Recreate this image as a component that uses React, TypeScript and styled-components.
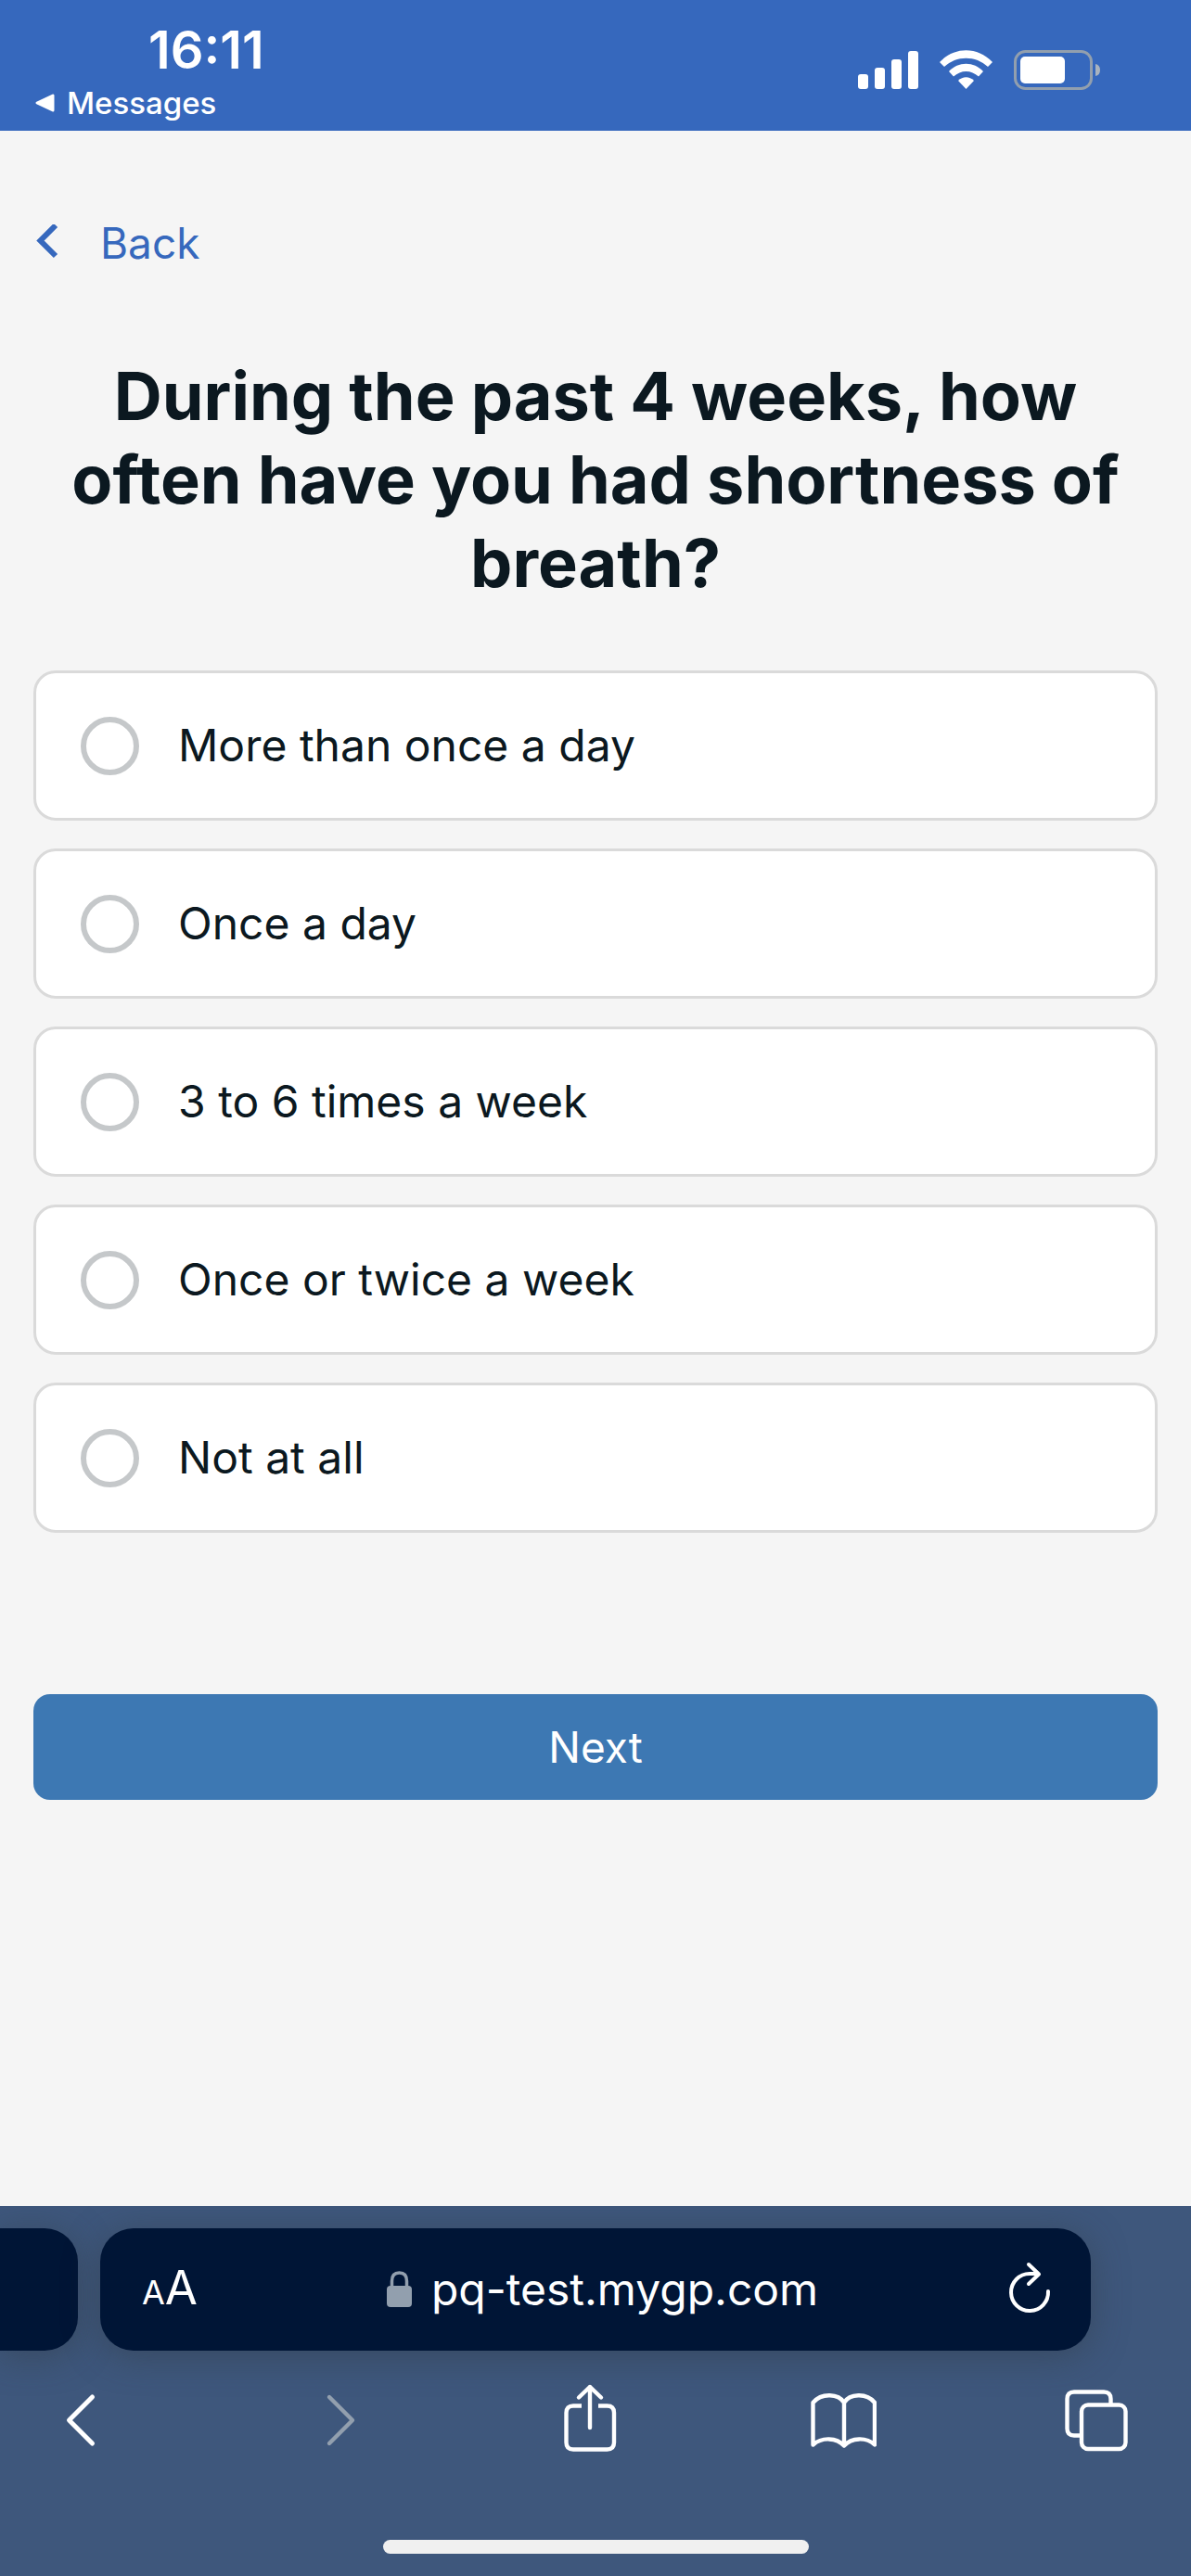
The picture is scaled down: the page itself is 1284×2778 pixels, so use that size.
import React, { useState } from "react";
import styled, { createGlobalStyle } from "styled-components";

const GlobalStyle = createGlobalStyle`
  *, *::before, *::after { box-sizing: border-box; }
  body { margin: 0; background: #f5f5f5; }
  button, input { font: inherit; margin: 0; }
`;

const Screen = styled.div`
  min-height: 100vh;
  display: flex;
  flex-direction: column;
  background: #f5f5f5;
  color: #0b1820;
  font-family: Inter, "Liberation Sans", sans-serif;
  font-size: 48px;
  line-height: 72px;
`;

const PlainButton = styled.button`
  display: flex;
  align-items: center;
  padding: 0;
  border: 0;
  background: none;
  color: inherit;

  &:disabled {
    color: #929fae;
  }
`;

const StatusBar = styled.header`
  display: flex;
  justify-content: space-between;
  height: 141px;
  padding: 24px 97px 0 36px;
  background: #3668bd;
  color: #ffffff;
`;

const StatusLeft = styled.div`
  display: flex;
  flex-direction: column;
`;

const Clock = styled.time`
  padding-left: 124px;
  font-size: 56px;
  font-weight: 600;
  line-height: 60px;
`;

const ReturnButton = styled(PlainButton)`
  gap: 12px;
  font-size: 33px;
  font-weight: 500;
  line-height: 54px;
`;

const StatusIcons = styled.div`
  display: flex;
  align-items: flex-start;
  gap: 23px;
  padding-top: 30px;
`;

const Main = styled.main`
  flex: 1;
  display: flex;
  flex-direction: column;
  padding: 85px 36px 0;
`;

const BackLink = styled.a`
  align-self: flex-start;
  display: flex;
  align-items: center;
  gap: 45px;
  color: #3668bd;
  font-size: 46px;
  text-decoration: none;
`;

const Form = styled.form`
  display: flex;
  flex-direction: column;
`;

const Question = styled.h1`
  margin: 84px 0 71px;
  font-size: 72px;
  font-weight: 700;
  font-variant-ligatures: none;
  line-height: 90px;
  text-align: center;
`;

const Options = styled.div`
  display: flex;
  flex-direction: column;
  gap: 30px;
`;

const Option = styled.label`
  display: flex;
  align-items: center;
  gap: 42px;
  height: 162px;
  padding: 0 48px;
  border: 3px solid #dadada;
  border-radius: 24px;
  background: #ffffff;
`;

const Radio = styled.input`
  appearance: none;
  width: 63px;
  height: 63px;
  border: 6px solid #c5c8ca;
  border-radius: 50%;
  background: #ffffff;

  &:checked {
    border-color: #3d78b3;
    background: #3d78b3;
    box-shadow: inset 0 0 0 9px #ffffff;
  }
`;

const NextButton = styled.button`
  height: 114px;
  margin-top: 174px;
  padding: 0;
  border: 0;
  border-radius: 18px;
  background: #3d78b3;
  color: #ffffff;
  font-size: 46px;
`;

const BrowserBar = styled.footer`
  padding: 24px 0;
  background: #3e577c;
  color: #ffffff;
  overflow: hidden;
`;

const Tabs = styled.div`
  display: flex;
  gap: 24px;
  padding-right: 108px;
`;

const NeighbourTab = styled.div`
  width: 84px;
  height: 132px;
  border-radius: 0 36px 36px 0;
  background: #001536;
  box-shadow: 0 6px 36px rgba(50, 60, 70, 0.5);
`;

const AddressBar = styled.div`
  flex: 1;
  display: flex;
  align-items: center;
  justify-content: space-between;
  height: 132px;
  padding: 0 42px 0 45px;
  border-radius: 36px;
  background: #001536;
  box-shadow: 0 6px 36px rgba(50, 60, 70, 0.5);
`;

const TextSizeButton = styled(PlainButton)`
  align-items: baseline;
  font-size: 51px;
`;

const SmallLetter = styled.span`
  font-size: 36px;
`;

const Address = styled.div`
  display: flex;
  align-items: center;
  gap: 21px;
`;

const Toolbar = styled.nav`
  display: flex;
  justify-content: space-between;
  padding: 33px 66px 0 52px;
`;

const HomeIndicator = styled.div`
  width: 459px;
  height: 15px;
  margin: 87px auto 0;
  border-radius: 8px;
  background: #f0f0f0;
`;

const line = {
  fill: "none",
  stroke: "currentColor",
  strokeWidth: 4.4,
  strokeLinecap: "round",
  strokeLinejoin: "round",
} as const;

const SignalIcon = () => (
  <svg width="65" height="42" viewBox="0 0 65 42" fill="#fff" aria-hidden="true">
    <rect x="0" y="26" width="11" height="16" rx="3" />
    <rect x="18" y="19" width="11" height="23" rx="3" />
    <rect x="36" y="10" width="11" height="32" rx="3" />
    <rect x="54" y="1" width="11" height="41" rx="3" />
  </svg>
);

const WifiIcon = () => (
  <svg width="57" height="42" viewBox="0 0 57 42" fill="#fff" aria-hidden="true">
    <path d="M0 13 C16 -4 41 -4 57 13 L52 18 C39 5.500 18 5.500 5 18 Z" />
    <path d="M10 23 C20 12 37 12 47 23 L42 28.500 C34 21 23 21 15 28.500 Z" />
    <path d="M20 33 C25 28 32 28 37 33 L28.500 42 Z" />
  </svg>
);

const BatteryIcon = () => (
  <svg width="94" height="43" viewBox="0 0 94 43" aria-hidden="true">
    <rect x="1.500" y="1.500" width="82" height="40" rx="11" fill="none" stroke="#929fae" strokeWidth="3" />
    <rect x="7" y="7" width="48" height="29" rx="5" fill="#fff" />
    <path d="M88 15 Q93 16 93 21.500 Q93 27 88 28 Z" fill="#a9b3bf" />
  </svg>
);

const tools = [
  {
    label: "Previous page",
    disabled: false,
    art: <path d="M47.500 17 L22.500 42 L47.500 67" strokeWidth="5" />,
  },
  {
    label: "Following page",
    disabled: true,
    art: <path d="M29 17 L54 42 L29 67" />,
  },
  {
    label: "Share",
    disabled: false,
    art: (
      <>
        <path
          d="M28 26.500 H19 Q11.500 26.500 11.500 34 V66 Q11.500 73.500 19 73.500 H55.500 Q63 73.500 63 66 V34 Q63 26.500 55.500 26.500 H46"
          strokeLinecap="butt"
        />
        <path d="M37 50 V6 M25 17.500 L37 6 L49 17.500" />
      </>
    ),
  },
  {
    label: "Bookmarks",
    disabled: false,
    art: (
      <path d="M37 23 C31 13.500 13 12 3.500 23 V68.500 C13 60 29 60.500 37 69.500 C45 60.500 61 60 70 68.500 V23 C61 12 43 13.500 37 23 V69" />
    ),
  },
  {
    label: "All tabs",
    disabled: false,
    art: (
      <>
        <path
          d="M51.500 25 V19 Q51.500 11.500 44 11.500 H12 Q4.500 11.500 4.500 19 V51 Q4.500 58.500 12 58.500 H20"
          strokeLinecap="butt"
        />
        <rect x="20" y="25.500" width="47.500" height="47.500" rx="7" />
      </>
    ),
  },
];

const choices = [
  "More than once a day",
  "Once a day",
  "3 to 6 times a week",
  "Once or twice a week",
  "Not at all",
];

export default function App() {
  const [answer, setAnswer] = useState("");

  return (
    <>
      <GlobalStyle />
      <Screen>
        <StatusBar>
          <StatusLeft>
            <Clock>16:11</Clock>
            <ReturnButton type="button">
              <svg width="24" height="22" viewBox="0 0 24 22" aria-hidden="true">
                <path d="M4 11 L21 3 V19 Z" fill="#fff" stroke="#fff" strokeWidth="3" strokeLinejoin="round" />
              </svg>
              Messages
            </ReturnButton>
          </StatusLeft>
          <StatusIcons>
            <SignalIcon />
            <WifiIcon />
            <BatteryIcon />
          </StatusIcons>
        </StatusBar>

        <Main>
          <BackLink href="#back">
            <svg width="27" height="40" viewBox="0 0 27 40" aria-hidden="true">
              <path d="M24 1 L7.500 17.500 L24 34" fill="none" stroke="currentColor" strokeWidth="6" />
            </svg>
            Back
          </BackLink>
          <Form onSubmit={(event) => event.preventDefault()}>
            <Question id="question">
              During the past 4 weeks, how often have you had shortness of breath?
            </Question>
            <Options role="radiogroup" aria-labelledby="question">
              {choices.map((choice) => (
                <Option key={choice}>
                  <Radio
                    type="radio"
                    name="frequency"
                    value={choice}
                    checked={answer === choice}
                    onChange={() => setAnswer(choice)}
                  />
                  {choice}
                </Option>
              ))}
            </Options>
            <NextButton type="submit">Next</NextButton>
          </Form>
        </Main>

        <BrowserBar>
          <Tabs>
            <NeighbourTab />
            <AddressBar>
              <TextSizeButton type="button" aria-label="Text size">
                <SmallLetter>A</SmallLetter>A
              </TextSizeButton>
              <Address>
                <svg width="27" height="40" viewBox="0 0 27 40" aria-hidden="true">
                  <rect x="0" y="16" width="27" height="23" rx="4" fill="#929fae" />
                  <path d="M5.500 17 V11 Q5.500 2 13.500 2 Q21.500 2 21.500 11 V17" fill="none" stroke="#929fae" strokeWidth="3.500" />
                </svg>
                pq-test.mygp.com
              </Address>
              <PlainButton type="button" aria-label="Reload">
                <svg width="48" height="60" viewBox="0 0 48 60" {...line} strokeWidth="4">
                  <path d="M44 32 A20 20 0 1 1 24 13 H33 M23 3 L34 13.500 L23 24" />
                </svg>
              </PlainButton>
            </AddressBar>
          </Tabs>
          <Toolbar aria-label="Browser">
            {tools.map((tool) => (
              <PlainButton key={tool.label} type="button" aria-label={tool.label} disabled={tool.disabled}>
                <svg width="72" height="84" viewBox="0 0 72 84" {...line}>
                  {tool.art}
                </svg>
              </PlainButton>
            ))}
          </Toolbar>
          <HomeIndicator />
        </BrowserBar>
      </Screen>
    </>
  );
}
